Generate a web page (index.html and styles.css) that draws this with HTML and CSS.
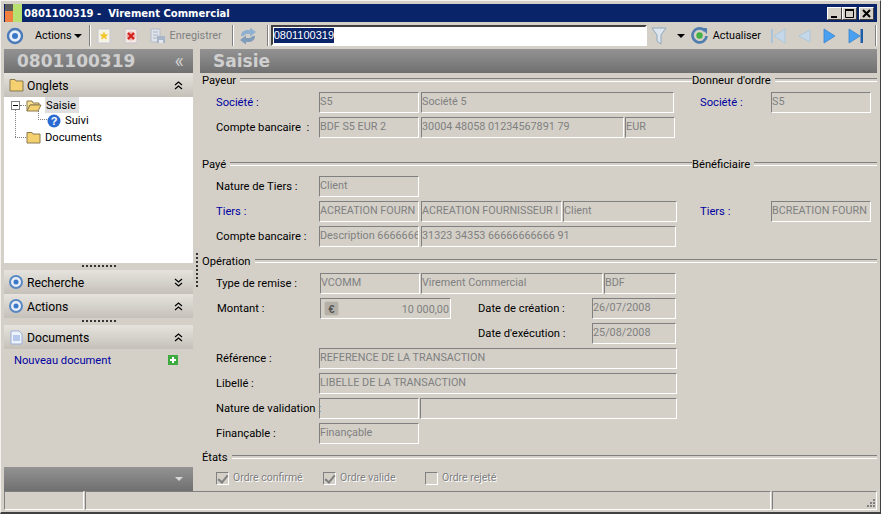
FILE: index.html
```html
<!DOCTYPE html>
<html lang="fr">
<head>
<meta charset="utf-8">
<title>Virement Commercial</title>
<link rel="stylesheet" href="styles.css">
</head>
<body>
<div class="window">
  <header class="titlebar">
    <svg class="app-icon" width="17" height="18" viewBox="0 0 17 18"><rect width="8" height="7" fill="#5a5a5a"/><rect y="7" width="8" height="11" fill="#f08040"/><rect x="8" width="9" height="18" fill="#b8e070"/></svg>
    <span class="title-text">0801100319 -&nbsp; Virement Commercial</span>
    <div class="winbtns">
      <span class="winbtn"><svg width="13" height="11" viewBox="0 0 13 11"><rect x="3" y="8" width="6" height="2" fill="#000"/></svg></span>
      <span class="winbtn"><svg width="13" height="11" viewBox="0 0 13 11"><path d="M2.500 2.500h8v7h-8z" fill="none" stroke="#000"/><rect x="2" y="1" width="9" height="2" fill="#000"/></svg></span>
      <span class="winbtn gap"><svg width="13" height="11" viewBox="0 0 13 11"><path d="M3 2l7 7M10 2l-7 7" stroke="#000" stroke-width="2" fill="none"/></svg></span>
    </div>
  </header>

  <div class="toolbar">
    <svg class="tb-ring" width="18" height="18" viewBox="0 0 18 18"><circle cx="9" cy="9" r="7" fill="#e8eef8" stroke="#4a7ab8" stroke-width="2.400"/><circle cx="9" cy="9" r="3" fill="#3a78c8"/></svg>
    <span class="tb-text tb-actions">Actions</span><span class="caret"></span>
    <span class="sep s1"></span>
    <svg class="tb-doc" width="14" height="16" viewBox="0 0 14 16"><path d="M1 1h12v14H1z" fill="#f6f2e4" stroke="#c4c8d4"/><path d="M7 3.500l1.300 2.800 3 .3-2.200 2 .7 3L7 10.100 4.200 11.600l.7-3-2.200-2 3-.3z" fill="#f0c830"/></svg>
    <svg class="tb-del" width="14" height="16" viewBox="0 0 14 16"><path d="M1 1h12v14H1z" fill="#f4e8e4" stroke="#c8c4c8"/><circle cx="7" cy="8" r="4.500" fill="#eeb0a8"/><path d="M4 5l6 6M10 5l-6 6" stroke="#d02020" stroke-width="2.200"/></svg>
    <svg class="tb-save" width="16" height="16" viewBox="0 0 16 16"><path d="M1 1h9v13H1z" fill="#dfe3ea" stroke="#b4bcc8"/><path d="M3 4h5M3 7h5M3 10h5" stroke="#aab4c4"/><rect x="7" y="8" width="8" height="7" fill="#a8b4c8"/><rect x="9" y="12" width="4" height="3" fill="#e4e8ee"/></svg>
    <span class="tb-text disabled tb-save-text">Enregistrer</span>
    <span class="sep s2"></span>
    <svg class="tb-sync" width="18" height="18" viewBox="0 0 18 18"><path d="M2 9C2 5 5 3 9 3h2V0.500L17 5l-6 4.500V7H9C7 7 5.500 7.500 4.500 9z" fill="#8fb0d0"/><path d="M16 9c0 4-3 6-7 6H7v2.500L1 13l6-4.500V11h2c2 0 3.500-.5 4.500-2z" fill="#7f9dbb"/></svg>
    <span class="sep s3"></span>
    <div class="search"><span class="selected">0801100319</span></div>
    <svg class="tb-funnel" width="16" height="18" viewBox="0 0 16 18"><path d="M1 1h14l-5 7v9l-4-3V8z" fill="#dde6ee" stroke="#93a8bc"/></svg>
    <span class="caret c2"></span>
    <svg class="tb-refresh" width="17" height="17" viewBox="0 0 17 17"><path d="M14 4A7 7 0 1 0 15.500 9" fill="none" stroke="#4f7eae" stroke-width="2.600"/><path d="M10 1h6v6z" fill="#4f7eae"/><circle cx="8.500" cy="8.500" r="3.200" fill="#44b044"/></svg>
    <span class="tb-text tb-act">Actualiser</span>
    <svg class="tb-first" width="16" height="16" viewBox="0 0 16 16"><rect x="1" y="1" width="2" height="14" fill="#a9c3da"/><path d="M15 1v14L4 8z" fill="#c4d8ea" stroke="#a8c4dc" stroke-width=".8"/></svg>
    <svg class="tb-prev" width="13" height="16" viewBox="0 0 13 16"><path d="M12 2v12L1 8z" fill="#c4d8ea" stroke="#a8c4dc" stroke-width=".8"/></svg>
    <svg class="tb-next" width="13" height="16" viewBox="0 0 13 16"><path d="M1 1v14l11-7z" fill="#4aa0f0" stroke="#3a84cc" stroke-width=".8"/></svg>
    <svg class="tb-last" width="16" height="16" viewBox="0 0 16 16"><path d="M1 1v14l11-7z" fill="#4aa0f0" stroke="#3a84cc" stroke-width=".8"/><rect x="12.500" y="1" width="2.500" height="14" fill="#1f5fa8"/></svg>
    <span class="sep s4"></span>
  </div>

  <div class="body">
    <aside class="side">
      <div class="banner side-banner"><span class="banner-title">0801100319</span><span class="chev-left">«</span></div>
      <div class="section-head">
        <svg class="sh-icon" width="15" height="14" viewBox="0 0 15 14"><path d="M1 3V1.500h5l1 1.500h7v10H1z" fill="#f4d070" stroke="#8a7a50"/></svg>
        <span>Onglets</span><svg class="chev" width="9" height="9" viewBox="0 0 9 9"><path d="M1 4l3.500-3L8 4M1 8l3.500-3L8 8" fill="none" stroke="#000" stroke-width="1.200"/></svg>
      </div>
      <div class="tree">
        <span class="tree-line l1"></span><span class="tree-line l2"></span><span class="tree-line l3"></span><span class="tree-line l4"></span>
        <span class="minus"></span>
        <div class="node"><svg width="16" height="13" viewBox="0 0 16 13"><path d="M1 12V2h5l1 2h6v2H4z" fill="#f8e090" stroke="#8a7a50"/><path d="M1 12l3-6h11l-3 6z" fill="#f4d070" stroke="#8a7a50"/></svg><span class="node-label active">Saisie</span></div>
        <div class="node sub"><svg width="14" height="14" viewBox="0 0 14 14"><circle cx="7" cy="7" r="6.500" fill="#2a6ad0"/><text x="7" y="11" class="q">?</text></svg><span class="node-label">Suivi</span></div>
        <div class="node"><svg width="15" height="13" viewBox="0 0 15 13"><path d="M1 3V1.500h5l1 1.500h7v9H1z" fill="#f4d070" stroke="#8a7a50"/></svg><span class="node-label">Documents</span></div>
      </div>
      <div class="grip"></div>
      <div class="section-head">
        <svg class="sh-ring" width="16" height="16" viewBox="0 0 16 16"><circle cx="8" cy="8" r="6" fill="#e8eef8" stroke="#5a88c0" stroke-width="2"/><circle cx="8" cy="8" r="2.500" fill="#3a78c8"/></svg>
        <span>Recherche</span><svg class="chev" width="9" height="9" viewBox="0 0 9 9"><path d="M1 1l3.500 3L8 1M1 5l3.500 3L8 5" fill="none" stroke="#000" stroke-width="1.200"/></svg>
      </div>
      <div class="section-head">
        <svg class="sh-ring" width="16" height="16" viewBox="0 0 16 16"><circle cx="8" cy="8" r="6" fill="#e8eef8" stroke="#5a88c0" stroke-width="2"/><circle cx="8" cy="8" r="2.500" fill="#3a78c8"/></svg>
        <span>Actions</span><svg class="chev" width="9" height="9" viewBox="0 0 9 9"><path d="M1 4l3.500-3L8 4M1 8l3.500-3L8 8" fill="none" stroke="#000" stroke-width="1.200"/></svg>
      </div>
      <div class="grip"></div>
      <div class="section-head">
        <svg class="sh-doc" width="13" height="15" viewBox="0 0 13 15"><path d="M1 1h8l3 3v10H1z" fill="#eef2fb" stroke="#9ab0d8"/><path d="M3 6h7M3 8h7M3 10h7" stroke="#7f9fdc"/></svg>
        <span>Documents</span><svg class="chev" width="9" height="9" viewBox="0 0 9 9"><path d="M1 4l3.500-3L8 4M1 8l3.500-3L8 8" fill="none" stroke="#000" stroke-width="1.200"/></svg>
      </div>
      <div class="doc-row"><a class="link">Nouveau document</a><svg width="10" height="10" viewBox="0 0 10 10"><rect width="10" height="10" fill="#3caa3c"/><path d="M5 2v6M2 5h6" stroke="#fff" stroke-width="2"/></svg></div>
      <div class="banner side-foot"><span class="foot-caret"></span></div>
    </aside>

    <div class="vsplit"><span class="vgrip"></span></div>

    <main class="main">
      <div class="banner main-banner"><span class="banner-title">Saisie</span></div>
      <div class="form">
        <section class="pair">
          <div class="col-left">
            <div class="legend"><span>Payeur</span></div>
            <div class="row"><label class="lbl blue">Société :</label><span class="f w100">S5</span><span class="f w253">Société 5</span></div>
            <div class="row"><label class="lbl">Compte bancaire&nbsp; :</label><span class="f w100">BDF S5 EUR 2</span><span class="f w203">30004 48058 01234567891 79</span><span class="f w49 tight">EUR</span></div>
          </div>
          <div class="col-right">
            <div class="legend"><span>Donneur d'ordre</span></div>
            <div class="row"><label class="lbl-r blue">Société :</label><span class="f w100">S5</span></div>
          </div>
        </section>

        <section class="pair payed">
          <div class="col-left">
            <div class="legend"><span>Payé</span></div>
            <div class="row"><label class="lbl">Nature de Tiers :</label><span class="f w100">Client</span></div>
            <div class="row"><label class="lbl blue">Tiers :</label><span class="f w100">ACREATION FOURN</span><span class="f w141">ACREATION FOURNISSEUR I</span><span class="f w113 tight">Client</span></div>
            <div class="row"><label class="lbl">Compte bancaire :</label><span class="f w100">Description 6666666</span><span class="f w255">31323 34353 66666666666 91</span></div>
          </div>
          <div class="col-right">
            <div class="legend"><span>Bénéficiaire</span></div>
            <div class="row spacer"></div>
            <div class="row"><label class="lbl-r blue">Tiers :</label><span class="f w100">BCREATION FOURN</span></div>
          </div>
        </section>

        <section class="op">
          <div class="legend"><span>Opération</span></div>
          <div class="row"><label class="lbl lbl-op">Type de remise :</label><span class="f w100">VCOMM</span><span class="f w182 tight1">Virement Commercial</span><span class="f w72 tight1">BDF</span></div>
          <div class="row"><label class="lbl lbl-mt">Montant :</label><span class="f w131 amount"><svg class="euro-ico" width="15" height="15" viewBox="0 0 15 15"><rect x=".5" y=".5" width="14" height="14" rx="2" fill="#b4b0a8" stroke="#c8c4bc"/><text x="7.500" y="11.500" class="euro">€</text></svg><span>10 000,00</span></span><label class="lbl-date">Date de création :</label><span class="f w84">26/07/2008</span></div>
          <div class="row"><span class="date-pad"></span><label class="lbl-date">Date d'exécution :</label><span class="f w84">25/08/2008</span></div>
          <div class="row"><label class="lbl">Référence :</label><span class="f w358">REFERENCE DE LA TRANSACTION</span></div>
          <div class="row"><label class="lbl">Libellé :</label><span class="f w358">LIBELLE DE LA TRANSACTION</span></div>
          <div class="row"><label class="lbl">Nature de validation :</label><span class="f w100"></span><span class="f w257 tight1"></span></div>
          <div class="row"><label class="lbl">Finançable :</label><span class="f w100">Finançable</span></div>
        </section>

        <section class="states">
          <div class="legend"><span>États</span></div>
          <div class="checks">
            <span class="check"><span class="box on"></span><span class="emboss w-conf">Ordre confirmé</span></span>
            <span class="check"><span class="box on"></span><span class="emboss w-val">Ordre valide</span></span>
            <span class="check"><span class="box"></span><span class="emboss">Ordre rejeté</span></span>
          </div>
        </section>
      </div>
    </main>
  </div>

  <footer class="status">
    <span class="cell c-a"></span><span class="cell c-b"></span>
    <span class="cell c-c"><svg width="11" height="11" viewBox="0 0 11 11"><g fill="#808080"><rect x="8" y="1" width="2" height="2"/><rect x="5" y="4" width="2" height="2"/><rect x="8" y="4" width="2" height="2"/><rect x="2" y="7" width="2" height="2"/><rect x="5" y="7" width="2" height="2"/><rect x="8" y="7" width="2" height="2"/></g></svg></span>
  </footer>
</div>
</body>
</html>
```
FILE: styles.css
```css
* { box-sizing: border-box; }
html, body { margin: 0; padding: 0; }
body { width: 881px; height: 514px; overflow: hidden; background: #d4d0c8; font: 11.2px/14px Roboto, "Liberation Sans", Arial, sans-serif; color: #000; }

.window { width: 881px; height: 514px; display: flex; flex-direction: column; background: #d4d0c8; border-top: 1px solid #f4f2ee; border-left: 1px solid #f4f2ee; border-right: 1px solid #404040; border-bottom: 2px solid #404040; padding: 3px 3px 2px 3px; }

.titlebar { height: 18px; flex: none; background: #0a246a; display: flex; align-items: center; color: #fff; }
.app-icon { margin-left: 1px; flex: none; }
.title-text { margin-left: 2px; font: bold 10px "DejaVu Sans", sans-serif; white-space: nowrap; }
.winbtns { margin-left: auto; display: flex; margin-right: 3px; }
.winbtn { width: 15px; height: 13px; background: #d4d0c8; border: 1px solid; border-color: #fff #404040 #404040 #fff; display: flex; align-items: center; justify-content: center; }
.winbtn.gap { margin-left: 2px; }

.toolbar { height: 27px; flex: none; display: flex; align-items: center; padding-left: 2px; font-size: 10.8px; }
.toolbar svg { flex: none; }
.tb-text { white-space: nowrap; }
.tb-actions { margin-left: 11px; }
.caret { width: 0; height: 0; border: 4px solid transparent; border-top-color: #000; border-bottom: 0; margin-left: 2px; }
.sep { width: 2px; height: 21px; border-left: 1px solid #808080; border-right: 1px solid #fff; flex: none; }
.s1 { margin-left: 7px; }
.tb-doc { margin-left: 6px; }
.tb-del { margin-left: 13px; }
.tb-save { margin-left: 12px; }
.tb-save-text { margin-left: 4px; }
.disabled { color: #808080; }
.s2 { margin-left: 10px; }
.tb-sync { margin-left: 5px; }
.s3 { margin-left: 10px; }
.search { width: 377px; height: 21px; margin-left: 2px; background: #fff; border: 2px solid; border-color: #404040 #fff #fff #404040; font: 11px/15px "Liberation Sans", sans-serif; padding: 1px 0 0 1px; }
.selected { background: #0a246a; color: #fff; display: inline-block; }
.tb-funnel { margin-left: 4px; }
.c2 { margin-left: 10px; }
.tb-refresh { margin-left: 6px; }
.tb-act { margin-left: 5px; }
.tb-first { margin-left: 9px; }
.tb-prev { margin-left: 12px; }
.tb-next { margin-left: 12px; }
.tb-last { margin-left: 12px; }
.s4 { margin-left: 11px; }

.body { flex: 1; display: flex; min-height: 0; }
.side { width: 189px; flex: none; display: flex; flex-direction: column; }
.banner { height: 24px; flex: none; background: linear-gradient(#939393, #707070); color: #cfcfcf; display: flex; align-items: center; }
.banner-title { font: bold 17px "DejaVu Sans", sans-serif; }
.side-banner .banner-title { margin-left: 13px; }
.chev-left { margin-left: auto; margin-right: 9px; font-size: 20px; }
.section-head { height: 24px; flex: none; background: linear-gradient(#e6e3de, #c5c1b9); display: flex; align-items: center; padding: 0 10px 0 5px; font-size: 12.2px; }
.section-head span { flex: 1; margin-left: 3px; padding-top: 1px; }
.sh-ring { margin-left: -1px; }
.sh-ring + span { margin-left: 3px; }
.sh-doc { margin-left: 1px; }
.sh-doc + span { margin-left: 4px; }
.tree { height: 166px; flex: none; background: #fff; position: relative; width: 189px; }
.node { display: flex; align-items: center; height: 16px; padding-left: 22px; }
.node.sub { padding-left: 43px; height: 15px; margin-bottom: 1px; }
.node-label { margin-left: 3px; padding: 1px 1px 0; }
.node-label.active { background: #dedede; height: 16px; line-height: 15px; padding-right: 3px; }
.q { font: bold 11px "Liberation Sans", sans-serif; fill: #fff; text-anchor: middle; }
.minus { position: absolute; left: 7px; top: 4px; width: 9px; height: 9px; border: 1px solid #808080; background: linear-gradient(#000, #000) center/5px 1px no-repeat #fff; z-index: 1; }
.tree-line { position: absolute; border-color: #808080; border-style: dotted; border-width: 0; }
.l1 { left: 16px; top: 8px; width: 6px; border-top-width: 1px; }
.l2 { left: 11px; top: 13px; height: 27px; border-left-width: 1px; }
.l3 { left: 11px; top: 40px; width: 11px; border-top-width: 1px; }
.l4 { left: 34px; top: 14px; width: 9px; height: 9px; border-left-width: 1px; border-bottom-width: 1px; }
.grip { height: 7px; flex: none; padding: 2px 76px 3px 78px; background: repeating-linear-gradient(90deg, #333 0 2px, transparent 2px 4px) content-box; }
.doc-row { flex: 1; display: flex; justify-content: space-between; padding: 5px 15px 0 10px; }
.doc-row svg { margin-top: 1px; }
.link { color: #0000a0; }
.side-foot { justify-content: flex-end; padding-right: 10px; }
.foot-caret { width: 0; height: 0; border: 4px solid transparent; border-top: 4px solid #d8d8d8; border-bottom: 0; }

.vsplit { width: 7px; flex: none; display: flex; align-items: center; justify-content: center; }
.vgrip { width: 2px; height: 34px; background: repeating-linear-gradient(#333 0 2px, transparent 2px 4px); }

.main { flex: 1; display: flex; flex-direction: column; min-width: 0; }
.main-banner .banner-title { margin-left: 13px; }
.form { padding-left: 2px; }
.pair { display: flex; }
.col-left { width: 490px; }
.col-right { flex: 1; }
.legend { height: 14px; display: flex; align-items: center; margin-bottom: 5px; white-space: nowrap; }
.legend span { padding-top: 1px; }
.legend::after { content: ""; flex: 1; height: 2px; margin-left: 4px; border-top: 1px solid #808080; border-bottom: 1px solid #fff; }
.row { display: flex; height: 21px; margin-bottom: 4px; align-items: center; }
.row label { padding-top: 1px; }
.lbl { width: 117px; padding-left: 14px; flex: none; white-space: nowrap; }
.lbl-r { width: 79px; padding-left: 8px; flex: none; }
.blue { color: #0000a0; }
.f { height: 21px; flex: none; border: 1px solid; border-color: #808080 #fff #fff #808080; color: #808080; font: 10.8px/17px Roboto, "Liberation Sans", sans-serif; padding-left: 0; overflow: hidden; white-space: nowrap; margin-right: 2px; }
.f.tight, .f.tight1 { margin-left: -1px; }
.w100 { width: 100px; }
.w253 { width: 253px; }
.w203 { width: 203px; }
.w49 { width: 50px; }
.w141 { width: 141px; }
.w113 { width: 114px; }
.w255 { width: 255px; }
.w182 { width: 182px; }
.w72 { width: 72px; }
.w131 { width: 131px; }
.w84 { width: 84px; }
.w358 { width: 358px; }
.w257 { width: 257px; }
.payed { margin-top: 15px; }
.op { margin-top: 3px; }
.lbl-op, .lbl-mt { width: 118px; }
.lbl-mt { padding-left: 15px; }
.amount { display: flex; justify-content: space-between; padding: 2px 1px 0 3px; }
.euro { font: bold 11px "Liberation Sans", sans-serif; fill: #555; text-anchor: middle; }
.lbl-date { width: 114px; margin-left: 25px; flex: none; white-space: nowrap; }
.date-pad { width: 251px; flex: none; }
.states { margin-top: 6px; }
.states .legend { margin-bottom: 7px; }
.checks { display: flex; padding-left: 14px; color: #808080; font-size: 10.5px; }
.check { display: flex; align-items: center; white-space: nowrap; }
.emboss { text-shadow: 1px 1px 0 #fff; }
.w-conf { width: 90px; }
.w-val { width: 85px; }
.box { width: 13px; height: 13px; border: 1px solid; border-color: #808080 #fff #fff #808080; margin-right: 4px; position: relative; flex: none; }
.box.on::after { content: ""; position: absolute; left: 3px; top: 0; width: 4px; height: 8px; border: solid #808080; border-width: 0 2px 2px 0; transform: rotate(40deg); }

.status { height: 19px; flex: none; display: flex; gap: 1px; }
.cell { height: 19px; border: 1px solid; border-color: #808080 #fff #fff #808080; }
.c-a { width: 80px; }
.c-b { width: 686px; }
.c-c { flex: 1; display: flex; justify-content: flex-end; align-items: flex-end; }
```
